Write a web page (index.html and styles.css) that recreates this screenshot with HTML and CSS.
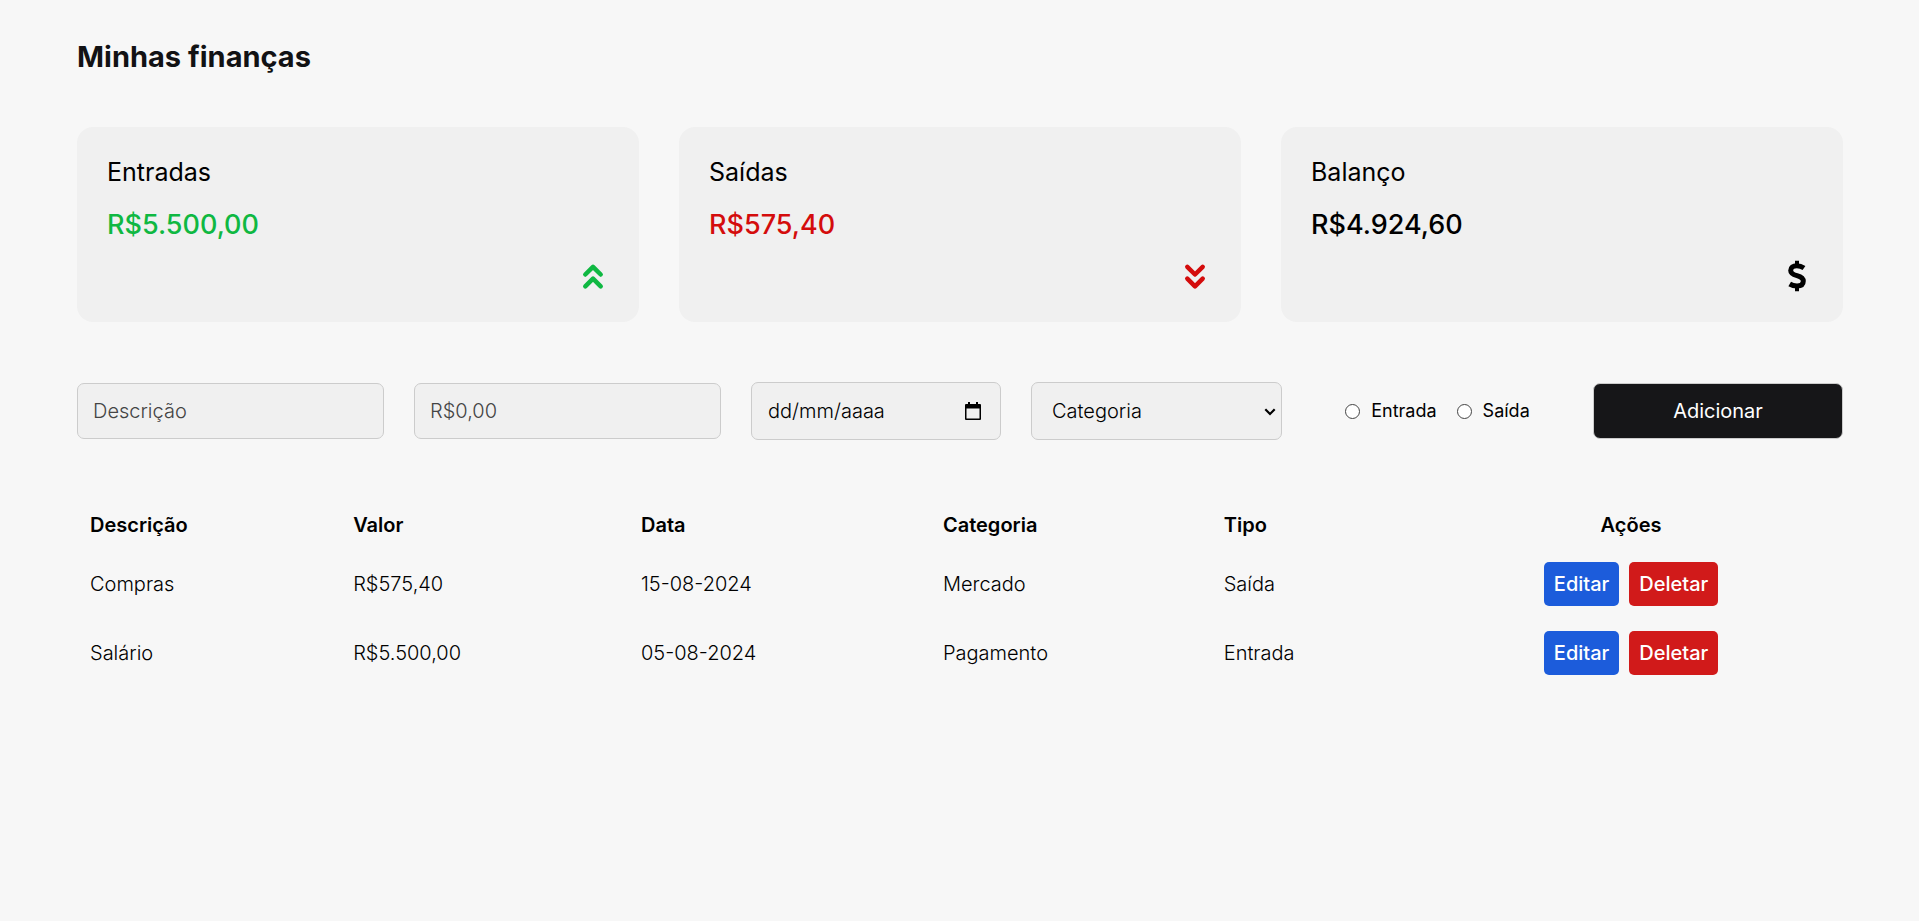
FILE: index.html
```html
<!DOCTYPE html>
<html lang="pt-BR">
<head>
<meta charset="utf-8">
<meta name="viewport" content="width=device-width, initial-scale=1">
<title>Minhas finanças</title>
<link rel="stylesheet" href="styles.css">
</head>
<body>
<main class="page">
  <h1 class="title">Minhas finanças</h1>

  <section class="cards">
    <article class="card">
      <h2 class="card-label">Entradas</h2>
      <p class="card-value income">R$5.500,00</p>
      <svg class="card-icon income" viewBox="0 0 32 32" aria-hidden="true"><path class="chevron" d="M8.3 14.500 16 6.800l7.700 7.700M8.300 26.300l7.700-7.700 7.700 7.700"/></svg>
    </article>
    <article class="card">
      <h2 class="card-label">Saídas</h2>
      <p class="card-value expense">R$575,40</p>
      <svg class="card-icon expense" viewBox="0 0 32 32" aria-hidden="true"><path class="chevron" d="M8.300 6.800l7.700 7.700 7.700-7.700M8.300 18.600l7.700 7.700 7.700-7.700"/></svg>
    </article>
    <article class="card">
      <h2 class="card-label">Balanço</h2>
      <p class="card-value">R$4.924,60</p>
      <svg class="card-icon" viewBox="0 0 32 32" fill="none" stroke="currentColor" aria-hidden="true"><path stroke-width="4" d="M16 0.700v5M16 26v5.300"/><path stroke-width="5" d="M23 8C20.500 6.300 18 5.700 15.800 5.700C12 5.700 9.700 7.500 9.700 10.400C9.700 13.600 12.500 14.600 16 15.600C19.500 16.600 22.300 17.800 22.300 21C22.300 24.400 19.800 26 16 26C13 26 10.800 25.300 8.700 24"/></svg>
    </article>
  </section>

  <form class="entry-form">
    <input class="field" type="text" placeholder="Descrição" aria-label="Descrição">
    <input class="field" type="text" inputmode="decimal" placeholder="R$0,00" aria-label="Valor">
    <div class="field field-tall date-field">
      <input class="date-input" type="text" placeholder="dd/mm/aaaa" aria-label="Data">
      <button class="date-button" type="button" aria-label="Abrir calendário">
        <svg class="date-icon" viewBox="0 0 20 20" aria-hidden="true"><path fill="currentColor" fill-rule="evenodd" d="M5 1h2v2h6V1h2v2h2q1 0 1 1v14q0 1-1 1H3q-1 0-1-1V4q0-1 1-1h2zM3.500 7.500v10h13v-10z"/></svg>
      </button>
    </div>
    <div class="select-field">
      <select class="field field-tall select" aria-label="Categoria">
        <option>Categoria</option>
        <option>Mercado</option>
        <option>Pagamento</option>
      </select>
      <svg class="select-arrow" viewBox="0 0 12 8" aria-hidden="true"><path d="M1.300 1.300 6 6l4.700-4.700" fill="none" stroke="currentColor" stroke-width="2.200"/></svg>
    </div>
    <div class="radios">
      <label class="radio-label"><input class="radio" type="radio" name="tipo">Entrada</label>
      <label class="radio-label"><input class="radio" type="radio" name="tipo">Saída</label>
    </div>
    <button class="submit" type="submit">Adicionar</button>
  </form>

  <table class="table">
    <colgroup>
      <col class="col-description"><col class="col-value"><col class="col-date"><col class="col-category"><col class="col-type"><col class="col-actions">
    </colgroup>
    <thead>
      <tr><th>Descrição</th><th>Valor</th><th>Data</th><th>Categoria</th><th>Tipo</th><th class="actions-head">Ações</th></tr>
    </thead>
    <tbody>
      <tr>
        <td>Compras</td><td>R$575,40</td><td>15-08-2024</td><td>Mercado</td><td>Saída</td>
        <td><div class="actions"><button class="action edit" type="button">Editar</button><button class="action delete" type="button">Deletar</button></div></td>
      </tr>
      <tr>
        <td>Salário</td><td>R$5.500,00</td><td>05-08-2024</td><td>Pagamento</td><td>Entrada</td>
        <td><div class="actions"><button class="action edit" type="button">Editar</button><button class="action delete" type="button">Deletar</button></div></td>
      </tr>
    </tbody>
  </table>
</main>
</body>
</html>
```
FILE: styles.css
```css
* { box-sizing: border-box; }

body {
  margin: 0;
  background: #f7f7f7;
  color: #000;
  font-family: Inter, "Liberation Sans", sans-serif;
  font-size: 20px;
  line-height: 24px;
}

button, input, select { font: inherit; color: inherit; }

.page { padding: 38px 76px 38px 77px; }

.title { margin: 0 0 51px; color: #121214; font-size: 29px; line-height: 38px; font-weight: 700; }

.cards { display: grid; grid-template-columns: repeat(3, 1fr); gap: 40px; margin-bottom: 60px; }

.card {
  display: flex;
  flex-direction: column;
  padding: 30px;
  background: #f0f0f0;
  border-radius: 16px;
}
.card-label { margin: 0 0 20px; font-size: 25px; line-height: 31px; font-weight: 400; }
.card-value { margin: 0 0 18px; font-size: 27px; line-height: 34px; font-weight: 500; }
.card-icon { align-self: flex-end; width: 32px; height: 32px; }
.chevron { fill: none; stroke: currentColor; stroke-width: 4.500; stroke-linecap: round; stroke-linejoin: round; }
.income { color: #0fb842; }
.expense { color: #d40c0c; }

.entry-form {
  display: grid;
  grid-template-columns: 307fr 307fr 250fr 251fr 251fr 250fr;
  align-items: center;
  gap: 30px;
  margin-bottom: 61px;
}
.field {
  width: 100%;
  min-width: 0;
  height: 56px;
  padding: 0 15px;
  background: #f0f0f0;
  border: 1px solid #ccc;
  border-radius: 7px;
  font-weight: 300;
}
.field::placeholder { color: #444; opacity: 1; }
.field-tall { height: 58px; }

.date-field { display: flex; align-items: center; justify-content: space-between; padding: 0 17px 0 16px; }
.date-input { flex: 1; min-width: 0; padding: 0; background: none; border: 0; font-weight: 300; }
.date-input::placeholder { color: #000; opacity: 1; }
.date-button { display: flex; padding: 0; background: none; border: 0; }
.date-icon { width: 20px; height: 20px; }

.select-field { position: relative; }
.select { padding: 0 30px 0 20px; appearance: none; }
.select-arrow {
  position: absolute;
  top: 50%;
  right: 6px;
  width: 12px;
  height: 8px;
  margin-top: -3px;
  pointer-events: none;
}

.radios { display: flex; justify-content: center; gap: 20px; font-size: 18px; }
.radio-label { display: flex; align-items: center; gap: 11px; }
.radio {
  width: 15px;
  height: 15px;
  margin: 0;
  appearance: none;
  background: #fff;
  border: 1px solid #444;
  border-radius: 50%;
}
.radio:checked { border: 4px solid #1c5cdb; }

.submit {
  height: 56px;
  background: #161618;
  border: 1px solid #ccc;
  border-radius: 7px;
  color: #fff;
}

.table { width: 100%; border-collapse: collapse; table-layout: fixed; }
.table th, .table td { padding: 12px 13px 13px; text-align: left; }
.table th { font-weight: 600; }
.table td { font-weight: 300; }
.table .actions-head { text-align: center; }
.col-description { width: 14.900%; }
.col-value { width: 16.300%; }
.col-date { width: 17.100%; }
.col-category { width: 15.900%; }
.col-type { width: 11.800%; }
.col-actions { width: 24%; }

.actions { display: flex; justify-content: center; gap: 10px; }
.action { padding: 10px; border: 0; border-radius: 5px; color: #fff; font-weight: 500; }
.edit { background: #1c5cdb; }
.delete { background: #d11a1a; }
```
